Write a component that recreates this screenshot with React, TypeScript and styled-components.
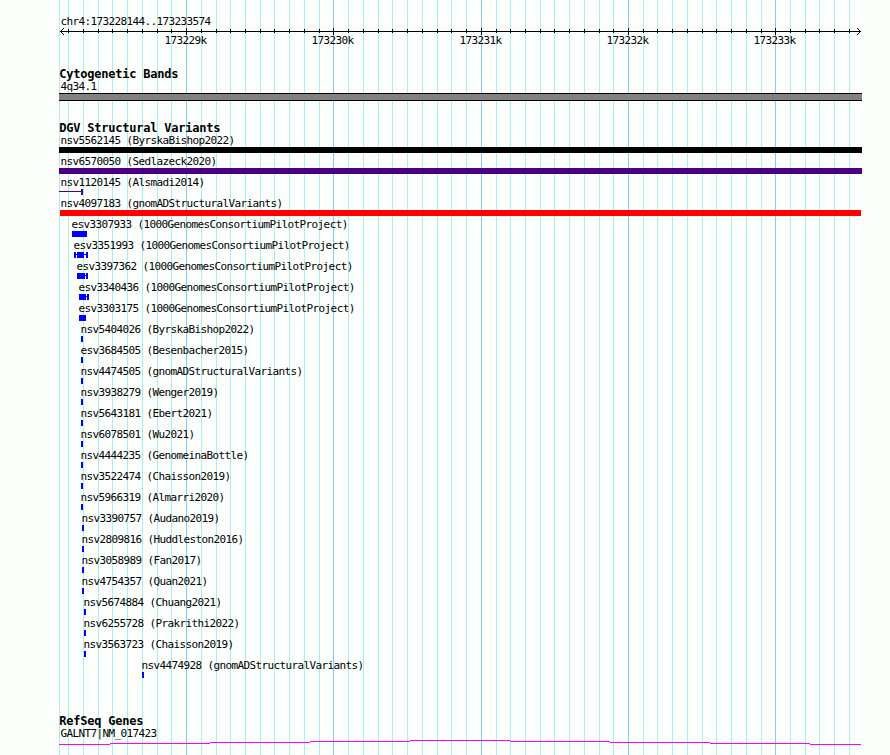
import React from 'react';
import styled, { createGlobalStyle } from 'styled-components';

const GlobalStyle = createGlobalStyle`
  body {
    margin: 0;
    background-color: #fcfefc;
  }
`;

const Browser = styled.main`
  position: relative;
  width: 890px;
  height: 755px;
  box-sizing: border-box;
  padding: 15px 0 0 59px;
  overflow: hidden;
  background-color: #fcfefc;
  color: #000;
  font-family: 'DejaVu Sans Mono', monospace;
  font-size: 11px;
  line-height: 13px;
  letter-spacing: -0.62px;
  white-space: pre;
`;

const Drawing = styled.svg`
  display: block;
  overflow: visible;
  shape-rendering: crispEdges;
`;

const Grid = styled(Drawing)`
  position: absolute;
  top: 0;
  left: 0;
`;

const Panel = styled.div`
  position: relative;
  width: 803px;
`;

const Region = styled.div`
  padding-left: 1.5px;
`;

const Ruler = styled.header`
  height: 52px;
`;

const Scale = styled.div`
  display: flex;
  gap: 105px;
  padding-left: 105.5px;
  margin-top: -1px;
`;

const ScaleLabel = styled.span<{ $shift: number }>`
  width: 42px;
  margin-right: ${props => props.$shift}px;
`;

const Track = styled.section<{ $height: number }>`
  height: ${props => props.$height}px;
`;

const TrackTitle = styled.h2`
  margin: 0;
  height: 13px;
  padding-left: 0.3px;
  line-height: 15px;
  font-size: 12px;
  font-weight: bold;
  letter-spacing: -0.224px;
`;

const Feature = styled.div`
  height: 21px;
`;

const FeatureLabel = styled.div<{ $indent: number }>`
  height: 13px;
  padding-left: ${props => props.$indent + 0.5}px;
`;

const Band = styled.div`
  height: 6px;
  background-color: #848084;
  border-top: 1px solid #000;
  border-bottom: 1px solid #000;
`;

const LEFT = 59;

const MAJOR = [186, 333, 481, 628, 775];
const MINOR = [
  68, 83, 98, 112, 127, 142, 157, 171, 201, 216, 230, 245, 260, 274, 289, 304, 319,
  348, 363, 378, 392, 407, 422, 437, 451, 466, 496, 510, 525, 540, 554, 569, 584, 599,
  613, 643, 657, 672, 687, 702, 716, 731, 746, 761, 790, 805, 819, 834, 849,
];

interface Variant {
  id: string;
  study: string;
  start: number;
  end: number;
  color?: string;
  // outer confidence range, drawn as whiskers around the box
  from?: number;
  to?: number;
}

const VARIANTS: Variant[] = [
  { id: 'nsv5562145', study: 'ByrskaBishop2022', start: 59, end: 862, color: '#000' },
  { id: 'nsv6570050', study: 'Sedlazeck2020', start: 59, end: 862, color: '#4b0082' },
  { id: 'nsv1120145', study: 'Alsmadi2014', start: 81, end: 83, from: 59, color: '#4b0082' },
  { id: 'nsv4097183', study: 'gnomADStructuralVariants', start: 60, end: 861, color: '#f00' },
  { id: 'esv3307933', study: '1000GenomesConsortiumPilotProject', start: 72, end: 87 },
  { id: 'esv3351993', study: '1000GenomesConsortiumPilotProject', start: 77, end: 84, from: 74, to: 88 },
  { id: 'esv3397362', study: '1000GenomesConsortiumPilotProject', start: 77, end: 85, to: 88 },
  { id: 'esv3340436', study: '1000GenomesConsortiumPilotProject', start: 79, end: 86, to: 89 },
  { id: 'esv3303175', study: '1000GenomesConsortiumPilotProject', start: 79, end: 86 },
  { id: 'nsv5404026', study: 'ByrskaBishop2022', start: 81, end: 83 },
  { id: 'esv3684505', study: 'Besenbacher2015', start: 81, end: 83 },
  { id: 'nsv4474505', study: 'gnomADStructuralVariants', start: 81, end: 83 },
  { id: 'nsv3938279', study: 'Wenger2019', start: 81, end: 83 },
  { id: 'nsv5643181', study: 'Ebert2021', start: 81, end: 83 },
  { id: 'nsv6078501', study: 'Wu2021', start: 81, end: 83 },
  { id: 'nsv4444235', study: 'GenomeinaBottle', start: 81, end: 83 },
  { id: 'nsv3522474', study: 'Chaisson2019', start: 81, end: 83 },
  { id: 'nsv5966319', study: 'Almarri2020', start: 81, end: 83 },
  { id: 'nsv3390757', study: 'Audano2019', start: 82, end: 84 },
  { id: 'nsv2809816', study: 'Huddleston2016', start: 82, end: 84 },
  { id: 'nsv3058989', study: 'Fan2017', start: 82, end: 84 },
  { id: 'nsv4754357', study: 'Quan2021', start: 82, end: 84 },
  { id: 'nsv5674884', study: 'Chuang2021', start: 84, end: 86 },
  { id: 'nsv6255728', study: 'Prakrithi2022', start: 84, end: 86 },
  { id: 'nsv3563723', study: 'Chaisson2019', start: 84, end: 86 },
  { id: 'nsv4474928', study: 'gnomADStructuralVariants', start: 142, end: 144 },
];

const GridLines: React.FC = () => (
  <Grid width="890" height="755">
    {[LEFT, ...MINOR].map(x => (
      <rect key={x} x={x} y="0" width="1" height="755" fill="#aceeec" />
    ))}
    {MAJOR.map(x => (
      <rect key={x} x={x} y="0" width="1" height="755" fill="#84ceec" />
    ))}
  </Grid>
);

const Axis: React.FC = () => (
  <Drawing width="803" height="7" viewBox="59 28 803 7">
    <rect x="60" y="31" width="801" height="1" />
    {MINOR.map(x => <rect key={x} x={x} y="29" width="1" height="4" />)}
    {MAJOR.map(x => <rect key={x} x={x} y="28" width="1" height="7" />)}
    {[1, 2, 3].map(d => (
      <React.Fragment key={d}>
        <rect x={60 + d} y={31 - d} width="1" height="1" />
        <rect x={60 + d} y={31 + d} width="1" height="1" />
        <rect x={860 - d} y={31 - d} width="1" height="1" />
        <rect x={860 - d} y={31 + d} width="1" height="1" />
      </React.Fragment>
    ))}
  </Drawing>
);

const VariantRow: React.FC<{ variant: Variant }> = ({ variant }) => {
  const { id, study, start, end, from, to, color = '#00f' } = variant;
  const lineStart = from ?? start;
  const lineEnd = to ?? end;

  return (
    <Feature>
      <FeatureLabel $indent={Math.max(1, lineStart - 1 - LEFT)}>
        {id} ({study})
      </FeatureLabel>
      <Drawing width="803" height="6" viewBox="59 0 803 6" fill={color}>
        <rect x={lineStart} y="2" width={lineEnd - lineStart} height="1" />
        <rect x={start} y="0" width={end - start} height="6" />
        {from !== undefined && from > LEFT && <rect x={from} y="0" width="2" height="6" />}
        {to !== undefined && <rect x={to - 2} y="0" width="2" height="6" />}
      </Drawing>
    </Feature>
  );
};

// The gene runs past both edges, so only its shallow intron arc shows
const GeneArc: React.FC = () => (
  <Drawing width="803" height="5" viewBox="59 740 803 5" fill="#f0f">
    <rect x="59" y="744" width="51" height="1" />
    <rect x="110" y="743" width="100" height="1" />
    <rect x="210" y="742" width="100" height="1" />
    <rect x="310" y="741" width="100" height="1" />
    <rect x="410" y="740" width="100" height="1" />
    <rect x="510" y="741" width="100" height="1" />
    <rect x="610" y="742" width="100" height="1" />
    <rect x="710" y="743" width="100" height="1" />
    <rect x="810" y="744" width="51" height="1" />
  </Drawing>
);

const App: React.FC = () => (
  <>
    <GlobalStyle />
    <Browser>
      <GridLines />
      <Panel>
        <Ruler>
          <Region>chr4:173228144..173233574</Region>
          <Axis />
          <Scale>
            {MAJOR.map((x, i) => (
              <ScaleLabel key={x} $shift={i === 1 ? 1 : 0}>{173229 + i}k</ScaleLabel>
            ))}
          </Scale>
        </Ruler>

        <Track $height={54}>
          <TrackTitle>Cytogenetic Bands</TrackTitle>
          <FeatureLabel $indent={1}>4q34.1</FeatureLabel>
          <Band />
        </Track>

        <Track $height={593}>
          <TrackTitle>DGV Structural Variants</TrackTitle>
          {VARIANTS.map(variant => <VariantRow key={variant.id} variant={variant} />)}
        </Track>

        <Track $height={40}>
          <TrackTitle>RefSeq Genes</TrackTitle>
          <FeatureLabel $indent={1}>GALNT7|NM_017423</FeatureLabel>
          <GeneArc />
        </Track>
      </Panel>
    </Browser>
  </>
);

export default App;
